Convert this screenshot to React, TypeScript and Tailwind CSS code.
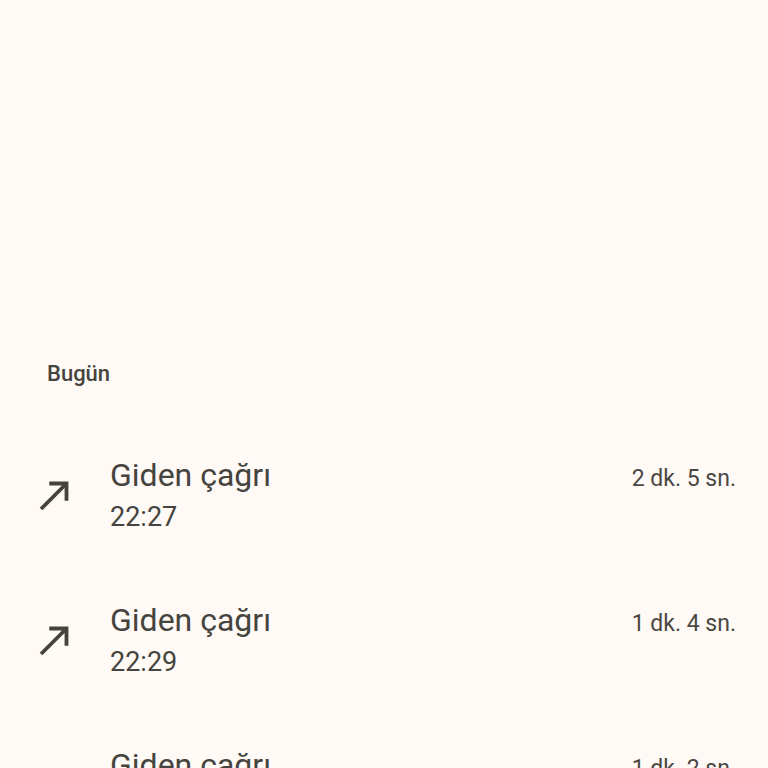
import React from 'react';

interface CallEntry {
  label: string;
  time: string;
  duration: string;
}

const calls: CallEntry[] = [
  { label: 'Giden çağrı', time: '22:27', duration: '2 dk. 5 sn.' },
  { label: 'Giden çağrı', time: '22:29', duration: '1 dk. 4 sn.' },
  { label: 'Giden çağrı', time: '22:31', duration: '1 dk. 2 sn.' },
];

const OutgoingIcon = () => (
  <svg width="46" height="46" viewBox="0 0 24 24" fill="#45433d">
    <path d="M9 5v2h6.59L4 18.59 5.41 20 17 8.41V15h2V5z" />
  </svg>
);

const App: React.FC = () => {
  return (
    <div
      className="min-h-screen h-[768px] overflow-hidden bg-[#fffaf6] text-[#46443e]"
      style={{ fontFamily: 'Roboto, "Noto Sans", sans-serif' }}
    >
      <div className="pt-[358px]">
        {/* Bölüm başlığı */}
        <div className="pl-[47px] text-[22px] leading-[32px] font-medium">Bugün</div>

        <div className="mt-[32px]">
          {calls.map((call, index) => (
            <div key={index} className="flex items-center h-[145px] pl-[32px] pr-[32px]">
              <div className="w-[78px] flex items-center">
                <OutgoingIcon />
              </div>
              <div className="flex-1">
                <div className="flex items-baseline justify-between">
                  <span className="text-[32px] leading-[44px]">{call.label}</span>
                  <span className="text-[23px] text-[#4a4843]">{call.duration}</span>
                </div>
                <div className="text-[27px] leading-[40px]">{call.time}</div>
              </div>
            </div>
          ))}
        </div>
      </div>
    </div>
  );
};

export default App;
